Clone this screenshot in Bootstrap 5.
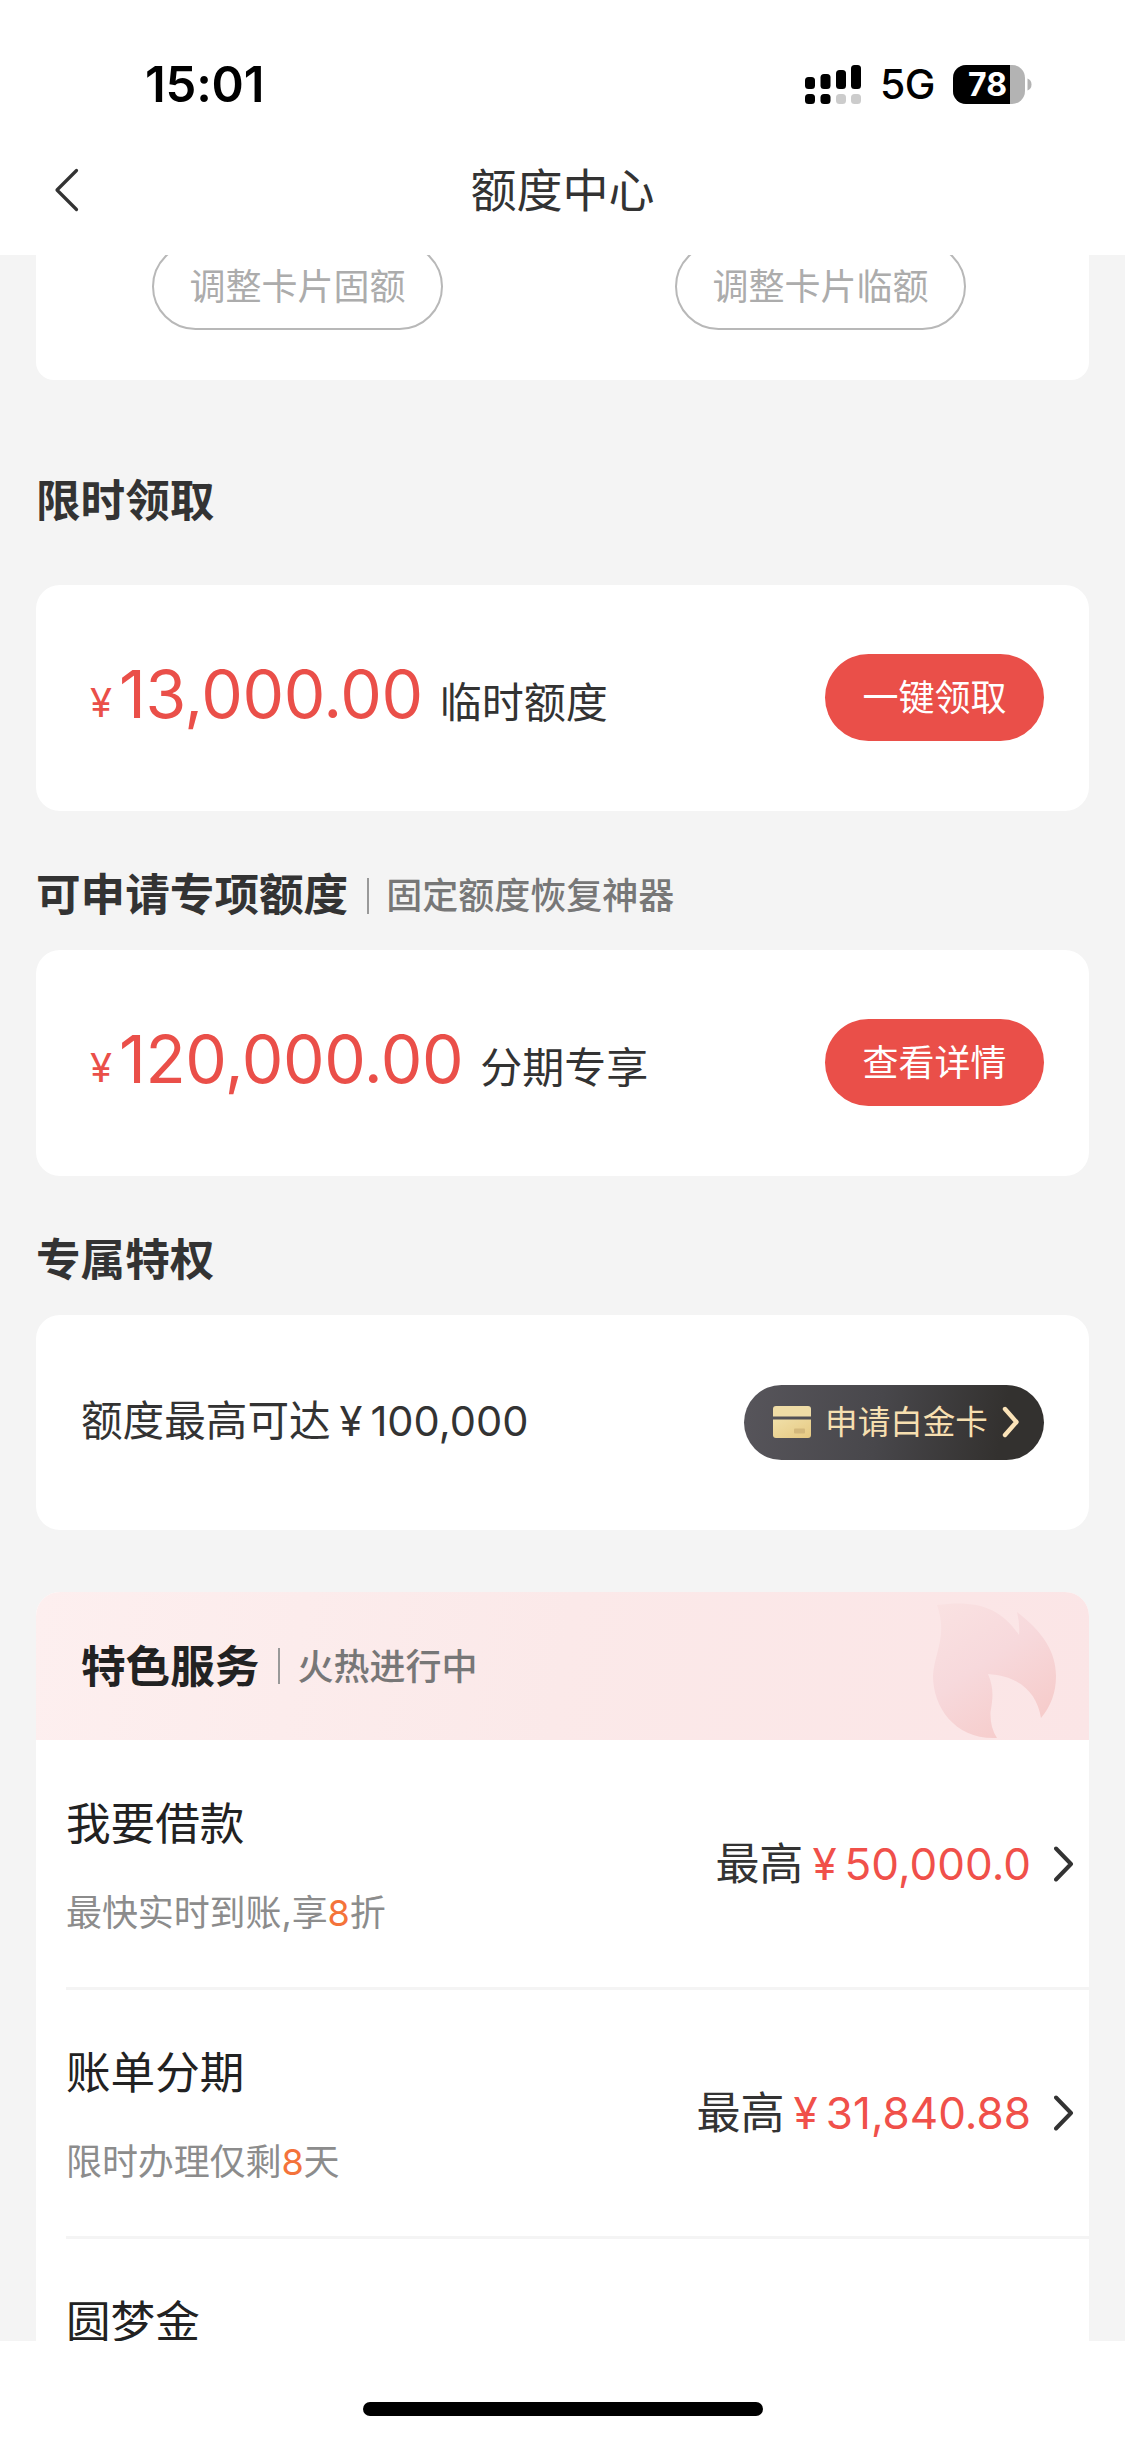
<!DOCTYPE html>
<html lang="zh-CN">
<head>
<meta charset="utf-8">
<meta name="viewport" content="width=device-width, initial-scale=1">
<title>额度中心</title>
<link href="https://cdn.jsdelivr.net/npm/bootstrap@5.3.0/dist/css/bootstrap.min.css" rel="stylesheet">
<style>
  body { font-family: Inter, "Noto Sans CJK SC", sans-serif; color: #333; background: #fff; line-height: 1; }
  .screen { width: 1125px; height: 2439px; }
  .topbar { height: 255px; }
  .status { height: 108px; padding: 60px 93px 0 145px; color: #000; }
  .clock { font-size: 49px; font-weight: 600; line-height: 49px; letter-spacing: -.2px; }
  .net { font-size: 41px; font-weight: 500; line-height: 49px; letter-spacing: -.5px; margin-left: 19px; margin-right: 18px; }
  .navrow { height: 147px; padding: 16px 53px 0; }
  .navrow .side { width: 30px; }
  .navtitle { font-size: 46px; }
  .content { height: 2086px; background: #f4f4f4; padding: 0 36px; }
  .panel { border: 0; border-radius: 24px; background: #fff; }
  .panel-limits { height: 125px; border-radius: 0 0 18px 18px; padding-left: 116px; gap: 232px; }
  .pill-ghost { width: 291px; height: 87px; margin-top: -12px; border: 2px solid #b8b8b8; color: #acacac; font-size: 36px; padding: 0; line-height: 1; background: none; }
  .heading { font-size: 44.6px; font-weight: 600; margin: 0; line-height: 1; }
  .subhead { font-size: 36px; font-weight: 500; color: #777; }
  .bar { width: 2px; height: 36px; background: #999; margin: 0 17px 0 19px; }
  .head-a { height: 205px; padding-top: 37px; }
  .head-b { height: 139px; padding-top: 30px; }
  .offer { height: 226px; padding: 0 45px 8px 54px; }
  .money { color: #ea4f49; font-size: 66px; font-weight: 400; letter-spacing: -.4px; }
  .yen { color: #ea4f49; font-size: 40px; font-weight: 400; margin-right: 7px; position: relative; top: -1px; }
  .label { font-size: 42px; margin-left: 17px; }
  .btn-claim { width: 219px; height: 87px; background: #ea4f49; color: #fff; font-size: 36px; border: 0; padding: 0; margin-top: 7px; line-height: 1; }
  .privilege { height: 215px; padding: 0 45px 1px 45px; font-size: 41.6px; }
  .num .cur { margin-right: 8px; }
  .privilege .num { margin-left: 9px; }
  .btn-card { width: 300px; height: 75px; border: 0; padding: 0 24px 0 29px; background: linear-gradient(100deg, #57555b 0%, #48474b 45%, #33312f 85%); color: #f6dfb0; font-size: 32.6px; line-height: 1; }
  .feature { margin-top: 62px; background: #fff; border-radius: 24px 24px 0 0; overflow: hidden; }
  .feature-head { height: 148px; padding: 0 33px 0 45px; background: linear-gradient(100deg, #fdefef 0%, #fbe9e9 50%, #fbe5e6 100%); }
  .feature-head .heading, .feature-head .subhead { padding-top: 2px; }
  .feature-head .heading { color: #222; }
  .service { height: 249px; margin-left: 30px; padding-right: 15px; border-bottom: 3px solid #f4f4f4; color: #222; }
  .feature-head + .service { height: 250px; }
  .svc-title { font-size: 44.6px; margin-top: 61px; }
  .feature-head + .service .svc-title { margin-top: 62px; }
  .svc-note { font-size: 36px; color: #8c8c8c; margin-top: 48px; letter-spacing: -.1px; }
  .svc-note span { color: #f4733a; }
  .svc-amt { font-size: 44px; color: #333; }
  .svc-amt .num { color: #f0504a; margin-left: 9px; }
  .svc-amt + svg { margin-left: 23px; }
  .homebar { height: 98px; }
  .homebar div { width: 400px; height: 14px; border-radius: 7px; background: #000; margin-top: 61px; }
  svg { display: block; flex: none; }
</style>
</head>
<body>
<div class="screen d-flex flex-column overflow-hidden">
  <header class="topbar">
    <div class="status d-flex justify-content-between align-items-start">
      <div class="clock">15:01</div>
      <div class="d-flex align-items-center">
        <svg width="57" height="46" viewBox="806 61 57 46">
          <g fill="#000"><rect x="807" y="76" width="10" height="12" rx="3.5"/><rect x="822.5" y="73" width="10" height="15" rx="3.5"/><rect x="838" y="69" width="10" height="19" rx="3.5"/><rect x="853" y="64" width="10" height="24" rx="3.5"/><rect x="807" y="93" width="10" height="10" rx="3.5"/><rect x="822.5" y="93" width="10" height="10" rx="3.5"/></g>
          <g fill="#ccc"><rect x="838" y="93" width="10" height="10" rx="3.5"/><rect x="853" y="93" width="10" height="10" rx="3.5"/></g>
        </svg>
        <span class="net">5G</span>
        <svg width="79" height="46" viewBox="953 61 79 46">
          <defs><clipPath id="bat"><rect x="953" y="64" width="72" height="39" rx="13"/></clipPath></defs>
          <g clip-path="url(#bat)"><rect x="953" y="64" width="72" height="39" fill="#b3b3b3"/><rect x="953" y="64" width="57" height="39" fill="#000"/></g>
          <path d="M1027.5 77.5Q1031.500 79 1031.500 83.500T1027.500 89.500Z" fill="#b3b3b3"/>
          <text x="987.500" y="95" text-anchor="middle" font-size="32" font-weight="700" fill="#fff">78</text>
        </svg>
      </div>
    </div>
    <nav class="navrow d-flex justify-content-between align-items-center">
      <div class="side"><svg width="28" height="44" viewBox="0 0 28 44"><path d="M23.500 2.500 4 22 23.500 41.500" fill="none" stroke="#333" stroke-width="3.200" stroke-linecap="round" stroke-linejoin="round"/></svg></div>
      <div class="navtitle">额度中心</div>
      <div class="side"></div>
    </nav>
  </header>

  <main class="content overflow-hidden">
    <section class="panel panel-limits d-flex align-items-start">
      <button class="btn rounded-pill pill-ghost">调整卡片固额</button>
      <button class="btn rounded-pill pill-ghost">调整卡片临额</button>
    </section>

    <div class="head-a d-flex align-items-center"><h2 class="heading">限时领取</h2></div>
    <section class="panel offer d-flex justify-content-between align-items-center">
      <div class="d-flex align-items-baseline"><span class="yen">¥</span><span class="money">13,000.00</span><span class="label">临时额度</span></div>
      <button class="btn rounded-pill btn-claim">一键领取</button>
    </section>

    <div class="head-b d-flex align-items-center"><h2 class="heading">可申请专项额度</h2><i class="bar"></i><span class="subhead">固定额度恢复神器</span></div>
    <section class="panel offer d-flex justify-content-between align-items-center">
      <div class="d-flex align-items-baseline"><span class="yen">¥</span><span class="money">120,000.00</span><span class="label">分期专享</span></div>
      <button class="btn rounded-pill btn-claim">查看详情</button>
    </section>

    <div class="head-b d-flex align-items-center"><h2 class="heading">专属特权</h2></div>
    <section class="panel privilege d-flex justify-content-between align-items-center">
      <div>额度最高可达<span class="num"><span class="cur">¥</span>100,000</span></div>
      <button class="btn rounded-pill btn-card d-flex align-items-center justify-content-between">
        <svg width="38" height="32" viewBox="0 0 38 32">
          <defs><linearGradient id="gold" x1="0" y1="0" x2="1" y2="1"><stop offset="0" stop-color="#f0dfa8"/><stop offset="1" stop-color="#e6c982"/></linearGradient></defs>
          <path d="M3 0H35Q38 0 38 3V10.500H0V3Q0 0 3 0Z" fill="#efdca6"/>
          <path d="M0 13.500H38V29Q38 32 35 32H3Q0 32 0 29Z" fill="url(#gold)"/>
          <rect x="21" y="22.500" width="11" height="5" rx="1" fill="#d3b87c"/>
        </svg>
        <span>申请白金卡</span>
        <svg width="18" height="32" viewBox="0 0 18 32"><path d="M3 3 14.500 16 3 29" fill="none" stroke="#fbe3b8" stroke-width="4.400" stroke-linecap="round" stroke-linejoin="round"/></svg>
      </button>
    </section>

    <section class="feature">
      <div class="feature-head d-flex align-items-center">
        <h2 class="heading">特色服务</h2><i class="bar"></i><span class="subhead">火热进行中</span>
        <svg class="ms-auto" width="123" height="148" viewBox="933 1592 123 148">
          <defs><linearGradient id="flame" x1="0" y1="0" x2=".6" y2="1"><stop offset="0" stop-color="#fae2e2"/><stop offset=".5" stop-color="#f7d9dc"/><stop offset="1" stop-color="#f6cccb"/></linearGradient></defs>
          <path fill="url(#flame)" d="M937 1605C974 1600 1000 1606 1019 1635Q1020 1624 1017 1612C1043 1632 1056 1652 1056 1676Q1056 1700 1041 1718C1037 1693 1020 1676 988 1674C994 1688 993 1698 990.500 1712Q990 1728 997 1738C956 1740 933 1708 933 1676C934 1653 948 1636 937 1605Z"/>
        </svg>
      </div>
      <div class="service d-flex justify-content-between">
        <div><div class="svc-title">我要借款</div><div class="svc-note">最快实时到账,享<span>8</span>折</div></div>
        <div class="d-flex align-items-center">
          <div class="svc-amt">最高<span class="num"><span class="cur">¥</span>50,000.0</span></div>
          <svg width="20" height="36" viewBox="0 0 20 36"><path d="M2 2.500 17 18 2 33.500" fill="none" stroke="#333" stroke-width="4" stroke-linecap="round" stroke-linejoin="round"/></svg>
        </div>
      </div>
      <div class="service d-flex justify-content-between">
        <div><div class="svc-title">账单分期</div><div class="svc-note">限时办理仅剩<span>8</span>天</div></div>
        <div class="d-flex align-items-center">
          <div class="svc-amt">最高<span class="num"><span class="cur">¥</span>31,840.88</span></div>
          <svg width="20" height="36" viewBox="0 0 20 36"><path d="M2 2.500 17 18 2 33.500" fill="none" stroke="#333" stroke-width="4" stroke-linecap="round" stroke-linejoin="round"/></svg>
        </div>
      </div>
      <div class="service"><div class="svc-title d-inline-block">圆梦金</div></div>
    </section>
  </main>

  <footer class="homebar d-flex justify-content-center align-items-start bg-white"><div></div></footer>
</div>
<script src="https://cdn.jsdelivr.net/npm/bootstrap@5.3.0/dist/js/bootstrap.bundle.min.js"></script>
</body>
</html>
